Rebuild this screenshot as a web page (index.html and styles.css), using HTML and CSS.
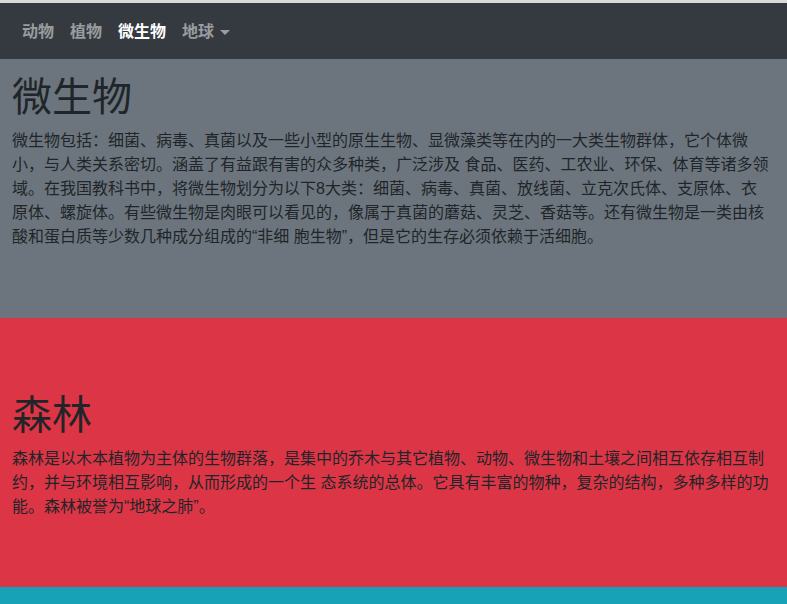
FILE: index.html
```html
<!DOCTYPE html>
<html lang="zh-CN">
<head>
<meta charset="utf-8">
<title>微生物</title>
<link rel="stylesheet" href="styles.css">
</head>
<body>
<div class="topline"></div>
<nav class="navbar">
  <a class="nav-link" href="#">动物</a>
  <a class="nav-link" href="#">植物</a>
  <a class="nav-link active" href="#">微生物</a>
  <a class="nav-link dropdown" href="#">地球<span class="caret"></span></a>
</nav>
<section class="block block-gray">
  <h1 class="title">微生物</h1>
  <p class="text">微生物包括：细菌、病毒、真菌以及一些小型的原生生物、显微藻类等在内的一大类生物群体，它个体微小，与人类关系密切。涵盖了有益跟有害的众多种类，广泛涉及 食品、医药、工农业、环保、体育等诸多领域。在我国教科书中，将微生物划分为以下8大类：细菌、病毒、真菌、放线菌、立克次氏体、支原体、衣原体、螺旋体。有些微生物是肉眼可以看见的，像属于真菌的蘑菇、灵芝、香菇等。还有微生物是一类由核酸和蛋白质等少数几种成分组成的“非细 胞生物”，但是它的生存必须依赖于活细胞。</p>
</section>
<section class="block block-red">
  <h1 class="title">森林</h1>
  <p class="text">森林是以木本植物为主体的生物群落，是集中的乔木与其它植物、动物、微生物和土壤之间相互依存相互制约，并与环境相互影响，从而形成的一个生 态系统的总体。它具有丰富的物种，复杂的结构，多种多样的功能。森林被誉为“地球之肺”。</p>
</section>
<section class="block block-teal"></section>
</body>
</html>
```
FILE: styles.css
```css
* { box-sizing: border-box; }
html, body {
  margin: 0;
  padding: 0;
}
body {
  font-family: "Liberation Sans", "Noto Sans CJK SC", sans-serif;
  font-size: 16px;
  line-height: 1.5;
  color: #212529;
  background: #17a2b8;
}
.topline {
  height: 3px;
  background: #dadada;
}
.navbar {
  display: flex;
  align-items: center;
  height: 56px;
  padding: 9px 14px 7px;
  background: #343a40;
}
.nav-link {
  display: flex;
  align-items: center;
  padding: 8px;
  color: rgba(255, 255, 255, 0.5);
  text-decoration: none;
  font-weight: 600;
}
.nav-link.active { color: #fff; }
.caret {
  display: inline-block;
  margin-left: 6px;
  width: 0;
  height: 0;
  border-top: 5px solid rgba(255, 255, 255, 0.5);
  border-left: 5px solid transparent;
  border-right: 5px solid transparent;
}
.block {
  padding-left: 12px;
  padding-right: 18px;
}
.block-gray {
  height: 259px;
  padding-top: 14px;
  background: #6c757d;
}
.block-red {
  height: 269px;
  padding-top: 73px;
  background: #dc3545;
}
.block-teal {
  height: 40px;
  background: #17a2b8;
}
.title {
  margin: 0 0 8px;
  font-size: 40px;
  line-height: 1.2;
  font-weight: 400;
}
.text {
  margin: 0 0 16px;
}
```
